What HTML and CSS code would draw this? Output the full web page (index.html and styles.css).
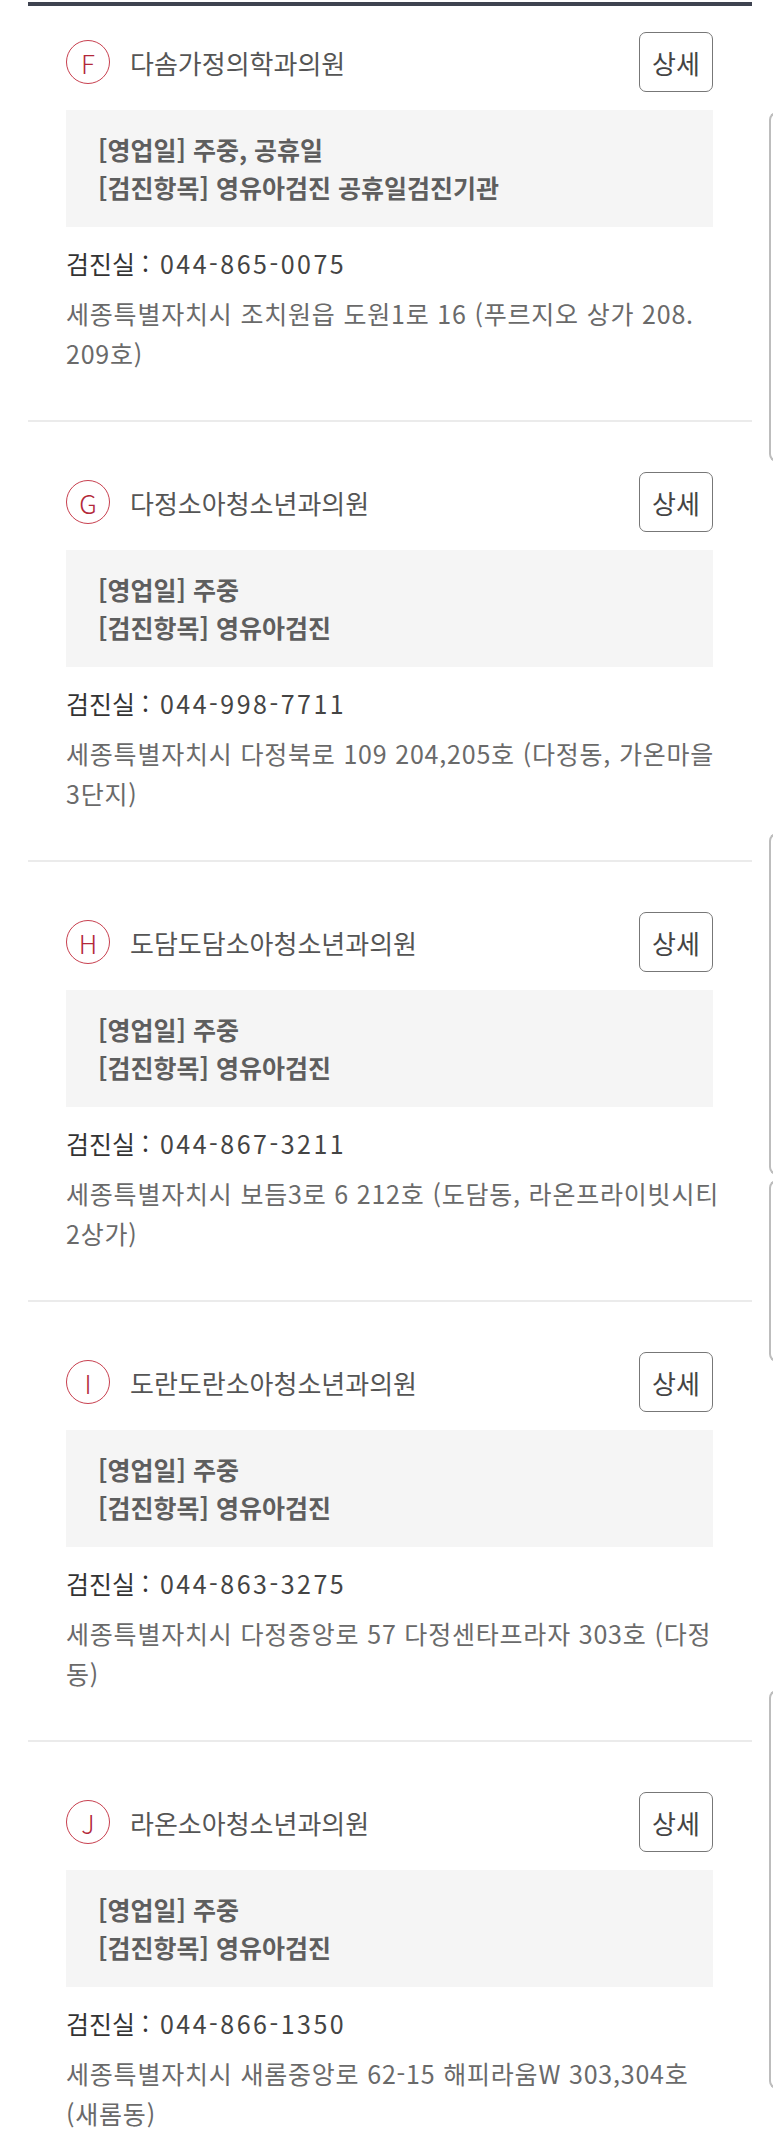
FILE: index.html
```html
<!DOCTYPE html>
<html lang="ko">
<head>
    <meta charset="UTF-8">
    <meta name="viewport" content="width=device-width, initial-scale=1.0">
    <title>검진기관 목록</title>
    <link rel="stylesheet" href="styles.css">
</head>
<body>
    <div class="clinic-list">
        <div class="clinic">
            <div class="clinic-head">
                <span class="badge">F</span>
                <span class="clinic-name">다솜가정의학과의원</span>
                <button class="btn-detail">상세</button>
            </div>
            <div class="clinic-info">
                <p>[영업일] 주중, 공휴일</p>
                <p>[검진항목] 영유아검진 공휴일검진기관</p>
            </div>
            <p class="clinic-tel">검진실 : <span class="tel-num">044-865-0075</span></p>
            <p class="clinic-addr">세종특별자치시 조치원읍 도원1로 16 (푸르지오 상가 208.<br>209호)</p>
        </div>
        <div class="clinic">
            <div class="clinic-head">
                <span class="badge">G</span>
                <span class="clinic-name">다정소아청소년과의원</span>
                <button class="btn-detail">상세</button>
            </div>
            <div class="clinic-info">
                <p>[영업일] 주중</p>
                <p>[검진항목] 영유아검진</p>
            </div>
            <p class="clinic-tel">검진실 : <span class="tel-num">044-998-7711</span></p>
            <p class="clinic-addr">세종특별자치시 다정북로 109 204,205호 (다정동, 가온마을<br>3단지)</p>
        </div>
        <div class="clinic">
            <div class="clinic-head">
                <span class="badge">H</span>
                <span class="clinic-name">도담도담소아청소년과의원</span>
                <button class="btn-detail">상세</button>
            </div>
            <div class="clinic-info">
                <p>[영업일] 주중</p>
                <p>[검진항목] 영유아검진</p>
            </div>
            <p class="clinic-tel">검진실 : <span class="tel-num">044-867-3211</span></p>
            <p class="clinic-addr">세종특별자치시 보듬3로 6 212호 (도담동, 라온프라이빗시티<br>2상가)</p>
        </div>
        <div class="clinic">
            <div class="clinic-head">
                <span class="badge">I</span>
                <span class="clinic-name">도란도란소아청소년과의원</span>
                <button class="btn-detail">상세</button>
            </div>
            <div class="clinic-info">
                <p>[영업일] 주중</p>
                <p>[검진항목] 영유아검진</p>
            </div>
            <p class="clinic-tel">검진실 : <span class="tel-num">044-863-3275</span></p>
            <p class="clinic-addr">세종특별자치시 다정중앙로 57 다정센타프라자 303호 (다정<br>동)</p>
        </div>
        <div class="clinic">
            <div class="clinic-head">
                <span class="badge">J</span>
                <span class="clinic-name">라온소아청소년과의원</span>
                <button class="btn-detail">상세</button>
            </div>
            <div class="clinic-info">
                <p>[영업일] 주중</p>
                <p>[검진항목] 영유아검진</p>
            </div>
            <p class="clinic-tel">검진실 : <span class="tel-num">044-866-1350</span></p>
            <p class="clinic-addr">세종특별자치시 새롬중앙로 62-15 해피라움W 303,304호<br>(새롬동)</p>
        </div>
    </div>

    <!-- edges of the next page's cards peeking in on the right -->
    <div class="peek peek-1"></div>
    <div class="peek peek-2"></div>
    <div class="peek peek-3"></div>
    <div class="peek peek-4"></div>
</body>
</html>
```

FILE: styles.css
```css
body {
    margin: 0;
    padding-top: 2px;
    background-color: #fff;
    font-family: "Noto Sans CJK KR", "Noto Sans", sans-serif;
    color: #555;
    position: relative;
    overflow: hidden;
}
p {
    margin: 0;
}
.clinic-list {
    margin: 0 21px 0 28px;
    border-top: 4px solid #3e4350;
}
.clinic {
    padding: 50px 39px 47px 38px;
    border-bottom: 2px solid #ebebeb;
}
.clinic:first-child {
    padding-top: 26px;
}
.clinic-head {
    display: flex;
    align-items: center;
    height: 60px;
}
.badge {
    width: 42px;
    height: 42px;
    border: 1.5px solid #c8404f;
    border-radius: 50%;
    color: #b3283a;
    font-size: 26px;
    font-weight: 300;
    display: flex;
    align-items: center;
    justify-content: center;
    margin-right: 20px;
    flex-shrink: 0;
}
.clinic-name {
    font-size: 26px;
    color: #555;
}
.btn-detail {
    margin-left: auto;
    width: 74px;
    height: 60px;
    padding: 0;
    background-color: #fff;
    border: 1.5px solid #777;
    border-radius: 7px;
    font-family: inherit;
    font-size: 26px;
    color: #444;
}
.clinic-info {
    margin-top: 18px;
    padding: 20px 32px 21px;
    background-color: #f5f5f5;
    font-size: 25px;
    font-weight: 700;
    line-height: 38px;
    color: #5e5e5e;
}
.clinic-tel {
    margin-top: 17px;
    font-size: 25px;
    line-height: 38px;
    color: #333;
}
.tel-num {
    margin-left: 4px;
    letter-spacing: 2.5px;
    color: #444;
}
.clinic-addr {
    margin-top: 11px;
    margin-right: -30px;
    font-size: 25px;
    letter-spacing: 0.8px;
    line-height: 40px;
    color: #6a6a6a;
}
.peek {
    position: absolute;
    left: 769px;
    width: 12px;
    border: 2px solid #bdbdbd;
    border-right: none;
    border-radius: 8px 0 0 8px;
}
.peek-1 {
    top: 112px;
    height: 346px;
}
.peek-2 {
    top: 833px;
    height: 338px;
}
.peek-3 {
    top: 1180px;
    height: 178px;
}
.peek-4 {
    top: 1690px;
    height: 395px;
}
```
